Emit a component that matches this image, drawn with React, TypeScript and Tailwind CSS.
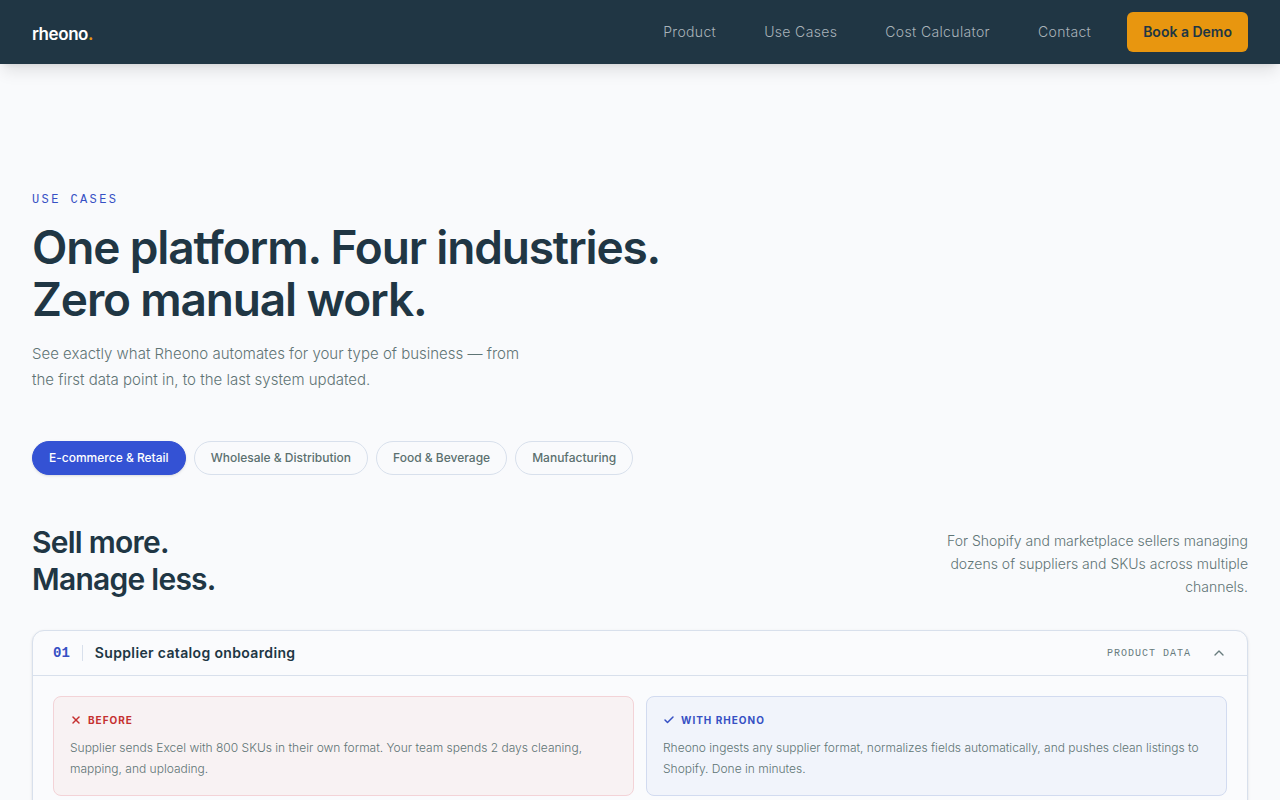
import { useState } from 'react';
import { Check, ChevronUp, X } from 'lucide-react';
import clsx from 'clsx';

const NAV_LINKS = ['Product', 'Use Cases', 'Cost Calculator', 'Contact'];

const INDUSTRIES = [
  'E-commerce & Retail',
  'Wholesale & Distribution',
  'Food & Beverage',
  'Manufacturing',
];

function Header() {
  return (
    <header className="sticky top-0 z-10 flex h-16 items-center justify-between bg-[#203644] px-8 shadow-lg">
      <a href="#" className="pt-1 text-[17px] leading-6 font-semibold tracking-tight text-white">
        rheono<span className="text-[#e8960f]">.</span>
      </a>
      <div className="flex items-center gap-9">
        <nav className="flex items-center gap-12 text-sm font-light tracking-wide text-[#a9b3ba]">
          {NAV_LINKS.map((link) => (
            <a key={link} href="#" className="hover:text-white">
              {link}
            </a>
          ))}
        </nav>
        <button className="h-10 rounded-md bg-[#e8960f] px-4 text-sm font-semibold whitespace-nowrap text-[#203644]">
          Book a Demo
        </button>
      </div>
    </header>
  );
}

interface OutcomeProps {
  kind: 'before' | 'after';
  label: string;
  text: string;
}

function Outcome({ kind, label, text }: OutcomeProps) {
  const Icon = kind === 'before' ? X : Check;

  return (
    <div
      className={clsx(
        'rounded-lg border p-4',
        kind === 'before' ? 'border-[#f3d3d7] bg-[#f8f2f3]' : 'border-[#d2dbf0] bg-[#f1f4fb]',
      )}
    >
      <h4
        className={clsx(
          'flex items-center gap-1.5 text-[10px] leading-[14px] font-bold tracking-widest uppercase',
          kind === 'before' ? 'text-[#c53030]' : 'text-[#3650c4]',
        )}
      >
        <Icon size={12} strokeWidth={3} />
        {label}
      </h4>
      <p className="mt-2.5 text-xs leading-[21px] font-light text-[#5f7475]">{text}</p>
    </div>
  );
}

function UseCaseCard() {
  const [open, setOpen] = useState(true);

  return (
    <article className="rounded-xl border border-[#d8e0ec] bg-[#fafbfd] shadow-sm">
      <button
        onClick={() => setOpen(!open)}
        aria-expanded={open}
        className="flex h-11 w-full items-center px-5 text-left"
      >
        <span className="font-['Liberation_Mono',monospace] text-sm font-bold text-[#3650c4]">01</span>
        <span className="mx-3 h-4 w-px bg-[#d8e0ec]" />
        <span className="text-sm font-semibold tracking-wide text-[#203644]">
          Supplier catalog onboarding
        </span>
        <span className="ml-auto font-['Liberation_Mono',monospace] text-[10px] tracking-widest text-[#687c7d] uppercase">
          Product data
        </span>
        <ChevronUp
          size={16}
          className={clsx('ml-5 text-[#687c7d] transition-transform', !open && 'rotate-180')}
        />
      </button>
      {open && (
        <div className="grid grid-cols-2 gap-3 border-t border-[#d8e0ec] p-5">
          <Outcome
            kind="before"
            label="Before"
            text="Supplier sends Excel with 800 SKUs in their own format. Your team spends 2 days cleaning, mapping, and uploading."
          />
          <Outcome
            kind="after"
            label="With Rheono"
            text="Rheono ingests any supplier format, normalizes fields automatically, and pushes clean listings to Shopify. Done in minutes."
          />
        </div>
      )}
    </article>
  );
}

export default function App() {
  const [industry, setIndustry] = useState(INDUSTRIES[0]);

  return (
    <div className="min-h-dvh bg-[#f9fafc] font-['Inter',sans-serif] text-[#203644]">
      <Header />
      <main className="px-8 pt-[127px] pb-12">
        <p className="font-['Liberation_Mono',monospace] text-xs leading-[18px] tracking-[0.2em] text-[#3650c4] uppercase">
          Use cases
        </p>
        <h1 className="mt-3 text-[46px] leading-[52px] font-semibold tracking-tight">
          One platform. Four industries.
          <br />
          Zero manual work.
        </h1>
        <p className="mt-4 text-[15px] leading-[26px] font-light text-[#5f7475]">
          See exactly what Rheono automates for your type of business — from
          <br />
          the first data point in, to the last system updated.
        </p>

        <div className="mt-12 flex flex-wrap gap-2">
          {INDUSTRIES.map((name) => (
            <button
              key={name}
              onClick={() => setIndustry(name)}
              className={clsx(
                'h-[34px] rounded-full border px-4 text-xs font-medium',
                name === industry
                  ? 'border-[#3452d4] bg-[#3452d4] text-white shadow-sm'
                  : 'border-[#d8e0ec] text-[#5b706f]',
              )}
            >
              {name}
            </button>
          ))}
        </div>

        <section className="mt-[49px]">
          <div className="mb-8 flex items-end justify-between">
            <h2 className="text-3xl leading-[37px] font-semibold tracking-tight">
              Sell more.
              <br />
              Manage less.
            </h2>
            <p className="text-right text-sm leading-[23px] font-light text-[#5f7475]">
              For Shopify and marketplace sellers managing
              <br />
              dozens of suppliers and SKUs across multiple
              <br />
              channels.
            </p>
          </div>
          <UseCaseCard />
        </section>
      </main>
    </div>
  );
}
